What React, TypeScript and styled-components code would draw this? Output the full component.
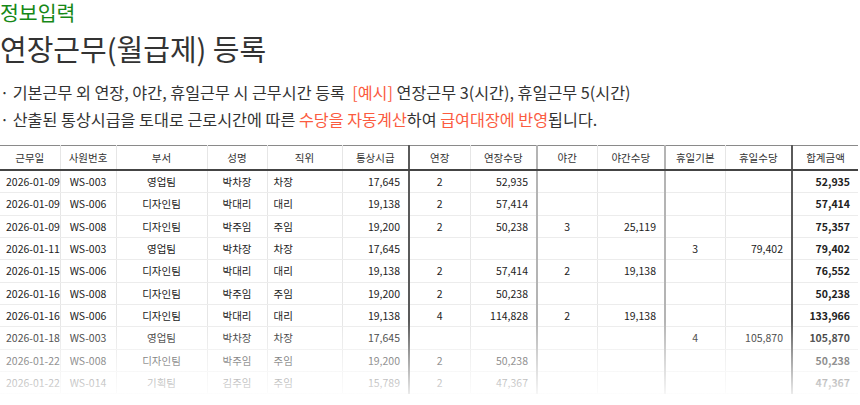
import React from 'react'
import styled, { createGlobalStyle } from 'styled-components'

const GlobalStyle = createGlobalStyle`
  html, body {
    margin: 0;
    padding: 0;
    background: #fff;
  }
  body {
    font-family: 'Noto Sans CJK KR', 'Noto Sans', sans-serif;
    color: #333;
  }
`

type Align = 'left' | 'center' | 'right'
type Sep = 'none' | 'grey' | 'dark'

interface Column {
  title: string
  width: number
  align: Align
  sep: Sep
}

const columns: Column[] = [
  { title: '근무일', width: 60, align: 'center', sep: 'none' },
  { title: '사원번호', width: 56, align: 'center', sep: 'none' },
  { title: '부서', width: 91, align: 'center', sep: 'none' },
  { title: '성명', width: 60, align: 'center', sep: 'none' },
  { title: '직위', width: 75, align: 'left', sep: 'none' },
  { title: '통상시급', width: 67, align: 'right', sep: 'dark' },
  { title: '연장', width: 61, align: 'center', sep: 'none' },
  { title: '연장수당', width: 67, align: 'right', sep: 'grey' },
  { title: '야간', width: 60, align: 'center', sep: 'none' },
  { title: '야간수당', width: 68, align: 'right', sep: 'grey' },
  { title: '휴일기본', width: 60, align: 'center', sep: 'none' },
  { title: '휴일수당', width: 67, align: 'right', sep: 'dark' },
  { title: '합계금액', width: 66, align: 'right', sep: 'none' },
]

const rows: string[][] = [
  ['2026-01-09', 'WS-003', '영업팀', '박차장', '차장', '17,645', '2', '52,935', '', '', '', '', '52,935'],
  ['2026-01-09', 'WS-006', '디자인팀', '박대리', '대리', '19,138', '2', '57,414', '', '', '', '', '57,414'],
  ['2026-01-09', 'WS-008', '디자인팀', '박주임', '주임', '19,200', '2', '50,238', '3', '25,119', '', '', '75,357'],
  ['2026-01-11', 'WS-003', '영업팀', '박차장', '차장', '17,645', '', '', '', '', '3', '79,402', '79,402'],
  ['2026-01-15', 'WS-006', '디자인팀', '박대리', '대리', '19,138', '2', '57,414', '2', '19,138', '', '', '76,552'],
  ['2026-01-16', 'WS-008', '디자인팀', '박주임', '주임', '19,200', '2', '50,238', '', '', '', '', '50,238'],
  ['2026-01-16', 'WS-006', '디자인팀', '박대리', '대리', '19,138', '4', '114,828', '2', '19,138', '', '', '133,966'],
  ['2026-01-18', 'WS-003', '영업팀', '박차장', '차장', '17,645', '', '', '', '', '4', '105,870', '105,870'],
  ['2026-01-22', 'WS-008', '디자인팀', '박주임', '주임', '19,200', '2', '50,238', '', '', '', '', '50,238'],
  ['2026-01-22', 'WS-014', '기획팀', '김주임', '주임', '15,789', '2', '47,367', '', '', '', '', '47,367'],
]

const sepColor: Record<Sep, string> = {
  none: '#e6e6e6',
  grey: '#b4b4b4',
  dark: '#5a5a5a',
}

export default function App() {
  return (
    <Page>
      <GlobalStyle />
      <Section>정보입력</Section>
      <Title>연장근무(월급제) 등록</Title>
      <Notes>
        <li>
          기본근무 외 연장, 야간, 휴일근무 시 근무시간 등록&nbsp;&nbsp;<Accent>[예시]</Accent> 연장근무 3(시간), 휴일근무
          5(시간)
        </li>
        <li>
          산출된 통상시급을 토대로 근로시간에 따른 <Accent>수당을 자동계산</Accent>하여 <Accent>급여대장에 반영</Accent>
          됩니다.
        </li>
      </Notes>
      <TableWrap>
        <Table>
          <colgroup>
            {columns.map((c) => (
              <col key={c.title} style={{ width: c.width }} />
            ))}
          </colgroup>
          <thead>
            <tr>
              {columns.map((c) => (
                <Th key={c.title} $sep={c.sep}>
                  {c.title}
                </Th>
              ))}
            </tr>
          </thead>
          <tbody>
            {rows.map((row, i) => (
              <tr key={i}>
                {row.map((v, j) => (
                  <Td key={j} $align={columns[j].align} $sep={columns[j].sep} $total={j === row.length - 1}>
                    {v}
                  </Td>
                ))}
              </tr>
            ))}
          </tbody>
        </Table>
        <Fade />
      </TableWrap>
    </Page>
  )
}

const Page = styled.div`
  width: 860px;
  height: 405px;
  overflow: hidden;
`

const Section = styled.div`
  font-size: 20.5px;
  line-height: 24px;
  color: #168816;
`

const Title = styled.h1`
  margin: 5px 0 0;
  font-size: 29px;
  font-weight: 400;
  line-height: 38px;
  color: #333;
`

const Notes = styled.ul`
  margin: 12px 0 0;
  padding: 0;
  list-style: none;
  font-size: 16.2px;
  line-height: 27px;
  color: #333;

  li::before {
    content: '· ';
  }
`

const Accent = styled.span`
  color: #fb5b3f;
`

const TableWrap = styled.div`
  position: relative;
  margin-top: 12px;
`

const Table = styled.table`
  width: 858px;
  table-layout: fixed;
  border-collapse: collapse;
  font-size: 10.5px;
  color: #222;
  border-top: 1px solid #8a8a8a;
`

const Th = styled.th<{ $sep: Sep }>`
  height: 23px;
  padding: 0;
  font-weight: 400;
  text-align: center;
  color: #333;
  border-bottom: 2px solid #444;
  border-right: ${(p) => (p.$sep === 'none' ? '1px' : '2px')} solid ${(p) => sepColor[p.$sep]};

  &:last-child {
    border-right: none;
  }
`

const Td = styled.td<{ $align: Align; $sep: Sep; $total: boolean }>`
  height: 21.33px;
  padding: 0 ${(p) => (p.$align === 'right' ? '8px' : '6px')} 0 6px;
  text-align: ${(p) => p.$align};
  font-weight: ${(p) => (p.$total ? 700 : 400)};
  white-space: nowrap;
  border-bottom: 1px solid #ececec;
  border-right: ${(p) => (p.$sep === 'none' ? '1px' : '2px')} solid ${(p) => sepColor[p.$sep]};

  &:last-child {
    border-right: none;
  }
`

const Fade = styled.div`
  position: absolute;
  left: 0;
  right: 0;
  top: 176px;
  bottom: 0;
  background: linear-gradient(rgba(255, 255, 255, 0), #fff 83px);
  pointer-events: none;
`
